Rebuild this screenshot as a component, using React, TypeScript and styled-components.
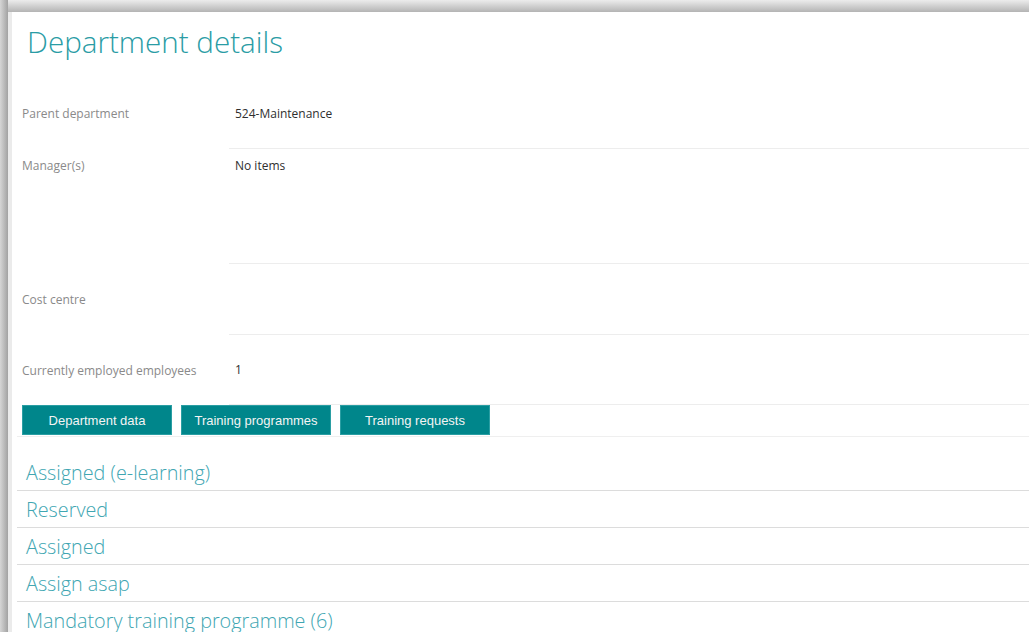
import React from 'react';
import styled, { createGlobalStyle } from 'styled-components';

const GlobalStyle = createGlobalStyle`
  html, body {
    margin: 0;
    padding: 0;
    height: 100%;
    overflow: hidden;
  }
  body {
    background: linear-gradient(180deg, #ececec 0px, #b4b4b4 12px, #d8d8d8 12px);
    font-family: "Open Sans", "Noto Sans", Arial, sans-serif;
  }
`;

const Frame = styled.div`
  padding: 12px 0 0 8px;
  height: 632px;
  box-sizing: border-box;
  background: linear-gradient(90deg, #d6d6d6 0px, #a2a2a2 8px, transparent 8px);
`;

const Panel = styled.div`
  background: #fff;
  border-left: 4px solid #ebebeb;
  height: 100%;
  padding: 0 0 0 5px;
  box-sizing: border-box;
  overflow: hidden;
`;

const Title = styled.h1`
  margin: 0;
  padding: 9px 0 0 10px;
  height: 66px;
  box-sizing: border-box;
  font-size: 29.6px;
  font-weight: 300;
  color: #2a9ca5;
`;

const Field = styled.div<{ $height: number }>`
  display: grid;
  grid-template-columns: 212px 1fr;
  height: ${(p) => p.$height}px;
  font-size: 12px;
`;

const Label = styled.div<{ $top?: boolean }>`
  display: flex;
  align-items: ${(p) => (p.$top ? 'flex-start' : 'center')};
  padding: ${(p) => (p.$top ? '8px' : '0')} 0 0 5px;
  color: #8a8a8a;
`;

const Value = styled.div<{ $top?: boolean }>`
  display: flex;
  align-items: ${(p) => (p.$top ? 'flex-start' : 'center')};
  padding: ${(p) => (p.$top ? '8px' : '0')} 0 0 6px;
  color: #2f2f2f;
  border-bottom: 1px solid #ededed;
`;

const ButtonBar = styled.div`
  display: flex;
  gap: 9px;
  padding: 0 0 1px 5px;
  border-bottom: 1px solid #efefef;
`;

const TabButton = styled.button`
  width: 150px;
  height: 30px;
  border: 1px solid #2a9ea3;
  background: #00868b;
  color: #f4f4f4;
  font-family: "Liberation Sans", Arial, sans-serif;
  font-size: 13px;
  padding: 0;
  cursor: pointer;
`;

const Sections = styled.div`
  margin-top: 17px;
`;

const Section = styled.div`
  height: 36px;
  display: flex;
  align-items: center;
  padding-left: 9px;
  border-bottom: 1px solid #dcdcdc;
  font-size: 19.8px;
  font-weight: 300;
  color: #40a6b2;
`;

const fields = [
  { label: 'Parent department', value: '524-Maintenance', height: 71 },
  { label: 'Manager(s)', value: 'No items', height: 115, top: true },
  { label: 'Cost centre', value: '', height: 71 },
  { label: 'Currently employed employees', value: '1', height: 70 },
];

const tabs = ['Department data', 'Training programmes', 'Training requests'];

const sections = [
  'Assigned (e-learning)',
  'Reserved',
  'Assigned',
  'Assign asap',
  'Mandatory training programme (6)',
];

export default function App() {
  return (
    <>
      <GlobalStyle />
      <Frame>
        <Panel>
          <Title>Department details</Title>
          {fields.map((f) => (
            <Field key={f.label} $height={f.height}>
              <Label $top={f.top}>{f.label}</Label>
              <Value $top={f.top}>{f.value}</Value>
            </Field>
          ))}
          <ButtonBar>
            {tabs.map((t) => (
              <TabButton key={t}>{t}</TabButton>
            ))}
          </ButtonBar>
          <Sections>
            {sections.map((s) => (
              <Section key={s}>{s}</Section>
            ))}
          </Sections>
        </Panel>
      </Frame>
    </>
  );
}
